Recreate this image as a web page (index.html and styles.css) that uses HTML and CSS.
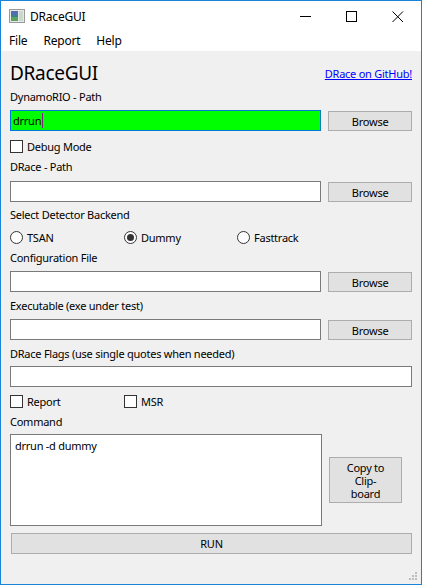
FILE: index.html
```html
<!DOCTYPE html>
<html>
<head>
<meta charset="utf-8">
<link rel="stylesheet" href="styles.css">
</head>
<body>
<div class="window">
  <div class="titlebar">
    <svg class="app-icon" width="16" height="14" viewBox="0 0 16 14">
      <rect x="0.5" y="0.5" width="15" height="13" fill="#e8e8e8" stroke="#9a9a9a"/>
      <rect x="2" y="2" width="7" height="10" fill="#3d7f8c"/>
      <rect x="2" y="2" width="7" height="4" fill="#4f6fb0"/>
      <rect x="2" y="8" width="7" height="4" fill="#5aa35a"/>
      <rect x="10" y="2" width="4" height="10" fill="#c9d9c9"/>
    </svg>
    <span class="title">DRaceGUI</span>
    <div class="caption">
      <svg width="46" height="30" viewBox="0 0 46 30"><line x1="17" y1="15.5" x2="28" y2="15.5" stroke="#000"/></svg>
      <svg width="46" height="30" viewBox="0 0 46 30"><rect x="17.5" y="10.5" width="10" height="10" fill="none" stroke="#000"/></svg>
      <svg width="46" height="30" viewBox="0 0 46 30"><path d="M17.5 10.5 L28 21 M28 10.5 L17.5 21" stroke="#000" fill="none"/></svg>
    </div>
  </div>
  <div class="menubar">
    <span class="menu">File</span>
    <span class="menu">Report</span>
    <span class="menu">Help</span>
  </div>
  <div class="content">
    <div class="header">
      <span class="heading">DRaceGUI</span>
      <a class="link" href="#">DRace on GitHub!</a>
    </div>

    <div class="label l1">DynamoRIO - Path</div>
    <div class="row r-in1">
      <div class="input focused"><span>drrun</span><span class="caret"></span></div>
      <div class="button browse">Browse</div>
    </div>
    <div class="checkrow r-debug">
      <div class="check"><span class="box"></span><span>Debug Mode</span></div>
    </div>

    <div class="label l2">DRace - Path</div>
    <div class="row r-in2">
      <div class="input"></div>
      <div class="button browse">Browse</div>
    </div>

    <div class="label l3">Select Detector Backend</div>
    <div class="radiorow">
      <div class="check"><span class="radio"></span><span>TSAN</span></div>
      <div class="check"><span class="radio on"></span><span>Dummy</span></div>
      <div class="check"><span class="radio"></span><span>Fasttrack</span></div>
    </div>

    <div class="label l4">Configuration File</div>
    <div class="row r-in3">
      <div class="input"></div>
      <div class="button browse">Browse</div>
    </div>

    <div class="label l5">Executable (exe under test)</div>
    <div class="row r-in4">
      <div class="input"></div>
      <div class="button browse">Browse</div>
    </div>

    <div class="label l6">DRace Flags (use single quotes when needed)</div>
    <div class="row r-in5">
      <div class="input full"></div>
    </div>

    <div class="radiorow r-checks">
      <div class="check"><span class="box"></span><span>Report</span></div>
      <div class="check"><span class="box"></span><span>MSR</span></div>
    </div>

    <div class="label l7">Command</div>
    <div class="cmdrow">
      <div class="textarea">drrun -d dummy</div>
      <div class="button copy">Copy to<br>Clip-<br>board</div>
    </div>

    <div class="button run">RUN</div>
  </div>
  <svg class="grip" width="10" height="10" viewBox="0 0 10 10">
    <rect x="6" y="0" width="2" height="2" fill="#bdbdbd"/>
    <rect x="3" y="3" width="2" height="2" fill="#bdbdbd"/>
    <rect x="6" y="3" width="2" height="2" fill="#bdbdbd"/>
    <rect x="0" y="6" width="2" height="2" fill="#bdbdbd"/>
    <rect x="3" y="6" width="2" height="2" fill="#bdbdbd"/>
    <rect x="6" y="6" width="2" height="2" fill="#bdbdbd"/>
  </svg>
</div>
</body>
</html>
```

FILE: styles.css
```css
* { box-sizing: border-box; }
html, body { margin: 0; padding: 0; }
body {
  font-family: "Noto Sans", "DejaVu Sans", sans-serif;
  font-size: 11px;
  letter-spacing: -0.25px;
  color: #000;
  background: #fff;
}
.window {
  position: relative;
  width: 422px;
  height: 585px;
  border: 1px solid #1883d7;
  background: #f0f0f0;
  display: flex;
  flex-direction: column;
}
.titlebar {
  height: 30px;
  background: #fff;
  display: flex;
  align-items: center;
  padding-left: 8px;
}
.app-icon { margin-right: 5px; }
.title { font-size: 12px; letter-spacing: -0.2px; }
.caption { margin-left: auto; display: flex; height: 30px; }
.caption svg { display: block; }
.menubar {
  height: 20px;
  background: #fff;
  display: flex;
  align-items: center;
  padding-left: 8px;
}
.menu { margin-right: 16px; line-height: 20px; font-size: 12px; letter-spacing: -0.2px; }
.content {
  padding: 11px 9px 0 9px;
  display: flex;
  flex-direction: column;
}
.header {
  height: 22px;
  display: flex;
  align-items: center;
  justify-content: space-between;
}
.heading { font-size: 19px; line-height: 22px; letter-spacing: -0.3px; }
.link { color: #0000ff; text-decoration: underline; margin-right: 0; }
.label { height: 16px; line-height: 16px; }
.l1 { margin-top: 5px; }
.l2 { margin-top: 6px; }
.l3 { margin-top: 5px; }
.l4 { margin-top: 6px; }
.l5 { margin-top: 6px; }
.l6 { margin-top: 6px; }
.l7 { margin-top: 6px; }
.row { display: flex; gap: 7px; height: 21px; }
.r-in1 { margin-top: 5px; }
.r-in2 { margin-top: 6px; }
.r-in3 { margin-top: 5px; }
.r-in4 { margin-top: 5px; }
.r-in5 { margin-top: 4px; }
.input {
  width: 312px;
  height: 21px;
  background: #fff;
  border: 1px solid #7a7a7a;
  display: flex;
  align-items: center;
  padding-left: 2px;
}
.input.full { width: 402px; }
.input.focused { background: #00ff00; border-color: #0078d7; }
.caret { width: 1px; height: 15px; background: #7f1f7f; margin-left: 1px; }
.button {
  background: #e1e1e1;
  border: 1px solid #adadad;
  display: flex;
  align-items: center;
  justify-content: center;
  text-align: center;
}
.browse { width: 84px; height: 20px; margin-top: 1px; }
.checkrow { margin-top: 8px; height: 14px; display: flex; }
.check { display: flex; align-items: center; gap: 4px; height: 14px; }
.box {
  width: 13px; height: 13px;
  border: 1px solid #333;
  background: #fff;
}
.radio {
  width: 13px; height: 13px;
  border: 1px solid #333;
  border-radius: 50%;
  background: #fff;
  display: flex;
  align-items: center;
  justify-content: center;
}
.radio.on::after {
  content: "";
  width: 7px; height: 7px;
  border-radius: 50%;
  background: #333;
}
.radiorow {
  margin-top: 7px;
  height: 14px;
  display: grid;
  grid-template-columns: 114px 113px auto;
}
.r-checks { margin-top: 7px; }
.cmdrow {
  margin-top: 4px;
  display: flex;
  align-items: center;
  gap: 7px;
}
.textarea {
  width: 312px;
  height: 92px;
  background: #fff;
  border: 1px solid #7a7a7a;
  padding: 3px 4px;
  line-height: 16px;
}
.copy { width: 73px; height: 46px; line-height: 13px; }
.run { margin-top: 7px; margin-left: 1px; width: 401px; height: 21px; }
.grip { position: absolute; right: 2px; bottom: 2px; }
```
